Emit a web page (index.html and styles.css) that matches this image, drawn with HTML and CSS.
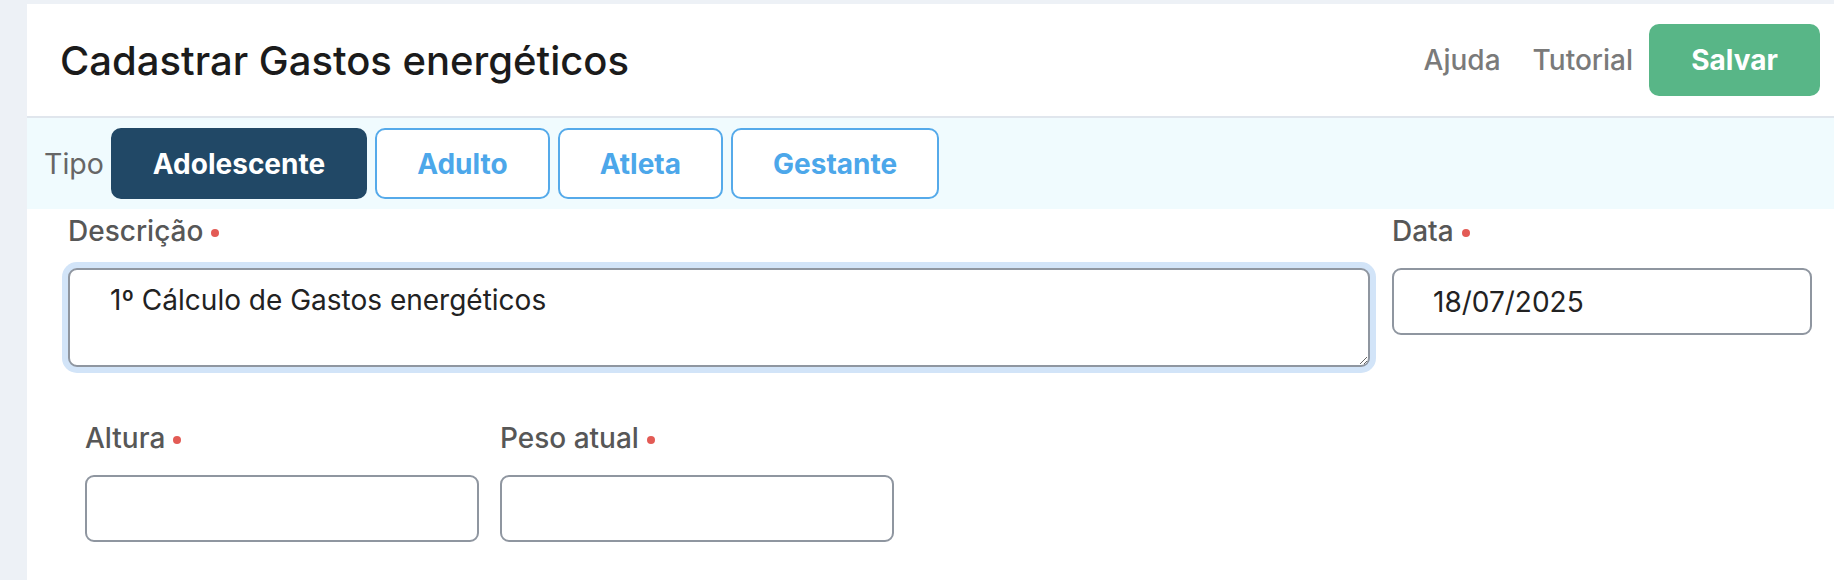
FILE: index.html
```html
<!DOCTYPE html>
<html lang="pt-BR">
<head>
<meta charset="utf-8">
<title>Cadastrar Gastos energéticos</title>
<link rel="stylesheet" href="styles.css">
</head>
<body>
<div class="page">
  <div class="card">
    <header class="header">
      <h1 class="title">Cadastrar Gastos energéticos</h1>
      <nav class="actions">
        <a class="link" href="#">Ajuda</a>
        <a class="link" href="#">Tutorial</a>
        <button class="btn-save" type="button">Salvar</button>
      </nav>
    </header>
    <div class="tabbar">
      <span class="tab-label">Tipo</span>
      <button class="tab tab-active" type="button">Adolescente</button>
      <button class="tab" type="button">Adulto</button>
      <button class="tab" type="button">Atleta</button>
      <button class="tab" type="button">Gestante</button>
    </div>
    <div class="form">
      <div class="row-main">
        <div class="field">
          <label class="label">Descrição<span class="req"></span></label>
          <textarea class="textarea">1º Cálculo de Gastos energéticos</textarea>
        </div>
        <div class="field">
          <label class="label">Data<span class="req"></span></label>
          <input class="input" type="text" value="18/07/2025">
        </div>
      </div>
      <div class="row-sub">
        <div class="field">
          <label class="label">Altura<span class="req"></span></label>
          <input class="input" type="text" value="">
        </div>
        <div class="field">
          <label class="label">Peso atual<span class="req"></span></label>
          <input class="input" type="text" value="">
        </div>
      </div>
    </div>
  </div>
</div>
</body>
</html>
```
FILE: styles.css
```css
* { box-sizing: border-box; }
html, body { margin: 0; height: 100%; }
body {
  background: #edf1f6;
  font-family: Inter, "Noto Sans", "Liberation Sans", sans-serif;
  overflow: hidden;
}
.page {
  padding: 4px 0 0 27px;
  height: 100%;
}
.card {
  background: #ffffff;
  height: 100%;
}
.header {
  height: 114px;
  border-bottom: 2px solid #e0e6ed;
  display: flex;
  align-items: center;
  justify-content: space-between;
  padding: 0 14px 0 33px;
}
.title {
  margin: 0;
  font-size: 40px;
  font-weight: 500;
  color: #1b1b1b;
}
.actions {
  display: flex;
  align-items: center;
}
.link {
  font-size: 28px;
  font-weight: 500;
  color: #7a7a7a;
  text-decoration: none;
  padding: 0 16px;
}
.btn-save {
  width: 171px;
  height: 72px;
  border: none;
  border-radius: 10px;
  background: #58b687;
  color: #ffffff;
  font-family: inherit;
  font-size: 28px;
  font-weight: 700;
}
.tabbar {
  background: #f0fbfe;
  display: flex;
  align-items: center;
  gap: 8px;
  padding: 10px 17px;
}
.tab-label {
  font-size: 28.5px;
  color: #666666;
  margin-right: -1px;
}
.tab {
  height: 71px;
  padding: 0 40px;
  border: 2px solid #55aaea;
  border-radius: 10px;
  background: #ffffff;
  color: #4ca7ea;
  font-family: inherit;
  font-size: 28px;
  font-weight: 700;
}
.tab-active {
  background: #214866;
  border-color: #214866;
  color: #ffffff;
}
.form {
  padding: 5px 22px 0 41px;
}
.row-main {
  display: grid;
  grid-template-columns: 1fr 420px;
  column-gap: 22px;
  align-items: start;
}
.row-sub {
  display: grid;
  grid-template-columns: 394px 394px;
  column-gap: 21px;
  padding: 54px 0 0 17px;
}
.field {
  display: flex;
  flex-direction: column;
}
.label {
  font-size: 28px;
  font-weight: 500;
  line-height: 34px;
  color: #575757;
  margin-bottom: 20px;
  display: flex;
  align-items: center;
}
.req {
  width: 8px;
  height: 8px;
  border-radius: 50%;
  background: #e35b55;
  margin-left: 8px;
  margin-top: 3px;
}
.textarea {
  height: 99px;
  border: 2px solid #8f96a0;
  border-radius: 9px;
  box-shadow: 0 0 0 6px #d2e4f8;
  padding: 13px 40px;
  font-family: inherit;
  font-size: 28px;
  line-height: 34px;
  color: #222222;
  resize: vertical;
  outline: none;
}
.input {
  height: 67px;
  border: 2px solid #8f96a0;
  border-radius: 9px;
  padding: 0 39px;
  font-family: inherit;
  font-size: 28px;
  color: #222222;
  background: #ffffff;
  outline: none;
}
```
